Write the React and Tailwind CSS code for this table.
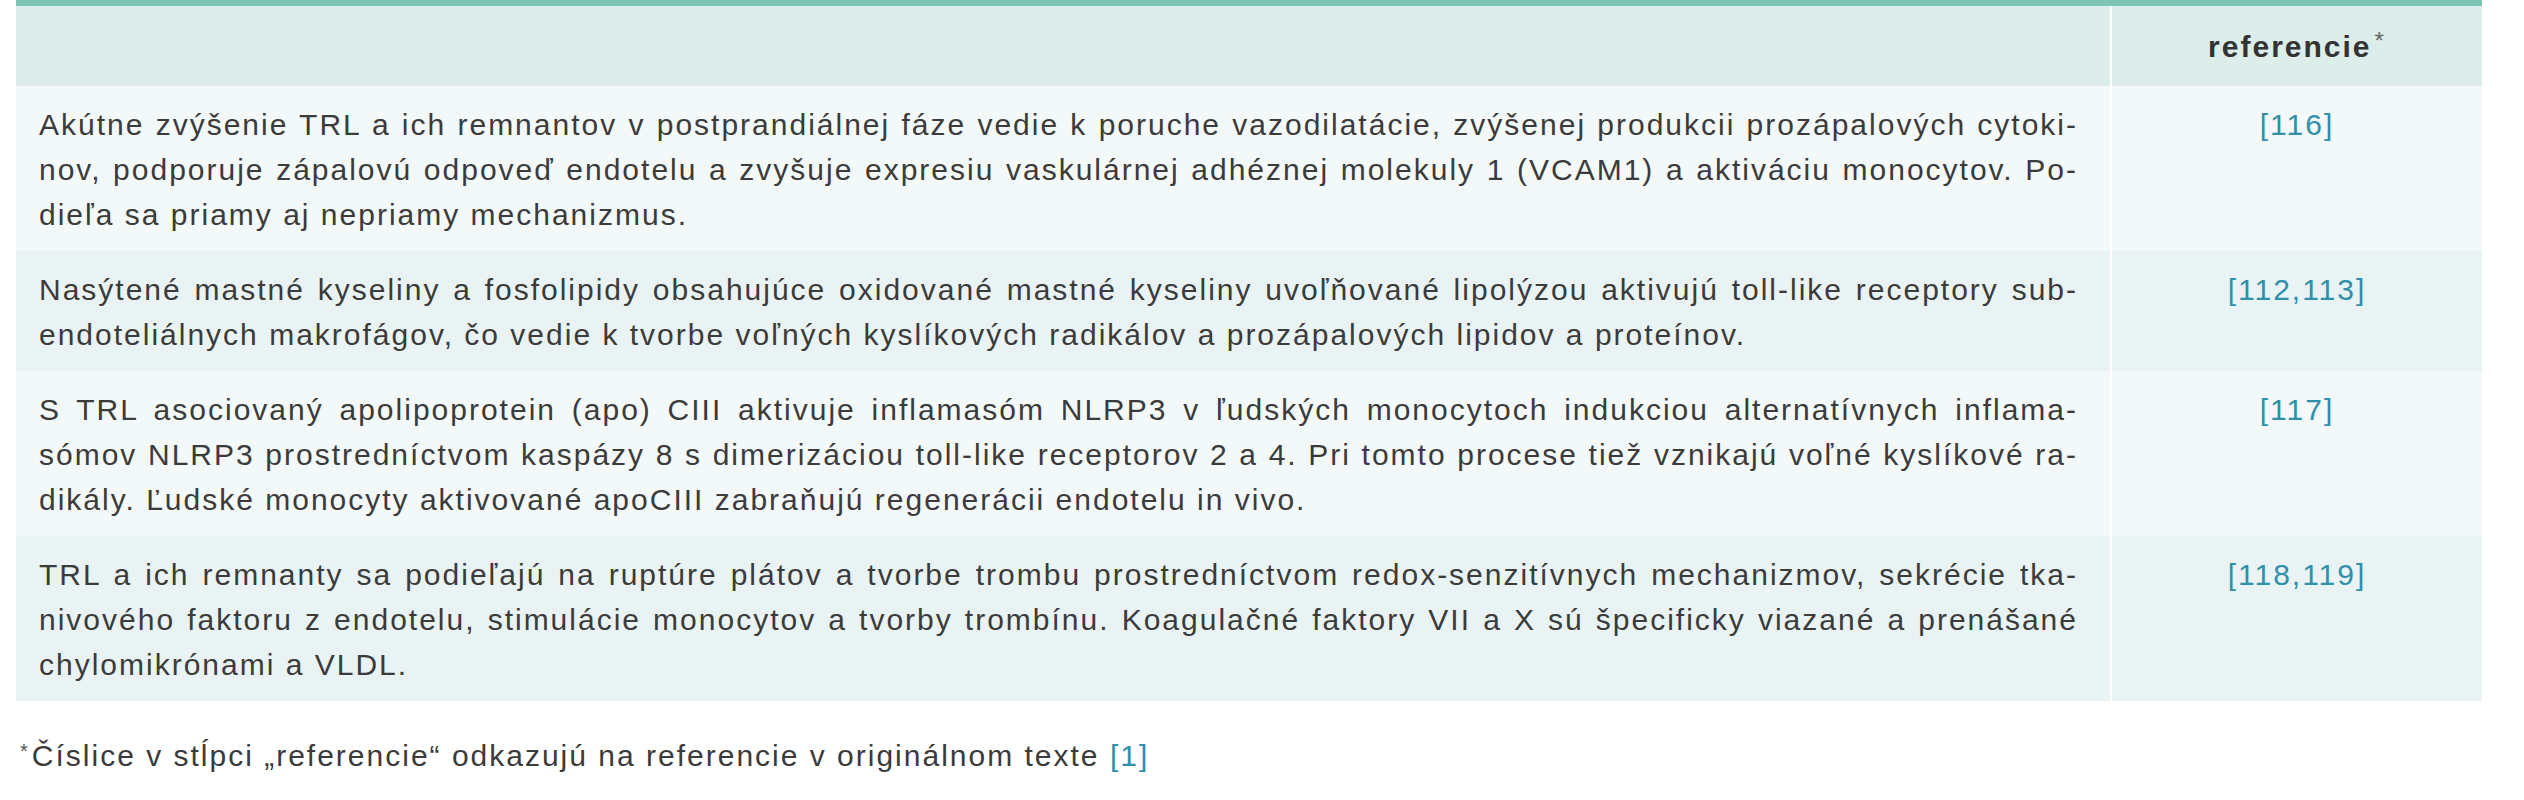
const rows = [
  {
    bg: 'bg-[#f3f8f8]',
    refs: '[116]',
    lines: [
      'Akútne zvýšenie TRL a ich remnantov v postprandiálnej fáze vedie k poruche vazodilatácie, zvýšenej produkcii prozápalových cytoki-',
      'nov, podporuje zápalovú odpoveď endotelu a zvyšuje expresiu vaskulárnej adhéznej molekuly 1 (VCAM1) a aktiváciu monocytov. Po-',
      'dieľa sa priamy aj nepriamy mechanizmus.',
    ],
  },
  {
    bg: 'bg-[#e9f3f3]',
    refs: '[112,113]',
    lines: [
      'Nasýtené mastné kyseliny a fosfolipidy obsahujúce oxidované mastné kyseliny uvoľňované lipolýzou aktivujú toll-like receptory sub-',
      'endoteliálnych makrofágov, čo vedie k tvorbe voľných kyslíkových radikálov a prozápalových lipidov a proteínov.',
    ],
  },
  {
    bg: 'bg-[#f3f8f8]',
    refs: '[117]',
    lines: [
      'S TRL asociovaný apolipoprotein (apo) CIII aktivuje inflamasóm NLRP3 v ľudských monocytoch indukciou alternatívnych inflama-',
      'sómov NLRP3 prostredníctvom kaspázy 8 s dimerizáciou toll-like receptorov 2 a 4. Pri tomto procese tiež vznikajú voľné kyslíkové ra-',
      'dikály. Ľudské monocyty aktivované apoCIII zabraňujú regenerácii endotelu in vivo.',
    ],
  },
  {
    bg: 'bg-[#e9f3f3]',
    refs: '[118,119]',
    lines: [
      'TRL a ich remnanty sa podieľajú na ruptúre plátov a tvorbe trombu prostredníctvom redox-senzitívnych mechanizmov, sekrécie tka-',
      'nivového faktoru z endotelu, stimulácie monocytov a tvorby trombínu. Koagulačné faktory VII a X sú špecificky viazané a prenášané',
      'chylomikrónami a VLDL.',
    ],
  },
];

export default function App() {
  return (
    <div className="min-h-[800px] bg-white font-['Liberation_Sans',Arial,sans-serif] text-[30px] leading-[45px] tracking-[2px] text-[#3b3b3b]">
      <div className="pl-[16px] pr-[42px]">
        <div className="border-t-[6px] border-[#7fc5b5]">
          {/* hlavička */}
          <div className="flex h-[80px] bg-[#dcedea]">
            <div className="flex-1" />
            <div className="flex w-[372px] items-center justify-center border-l-2 border-white font-semibold text-[#333]">
              referencie<span className="relative -top-[6px] ml-[3px] text-[24px] font-normal text-[#666]">*</span>
            </div>
          </div>

          {rows.map((r, i) => (
            <div key={i} className={`flex ${r.bg}`}>
              <div className="min-w-0 flex-1 pt-[16px] pb-[14px] pl-[23px] pr-[32px]">
                {r.lines.map((l, j) => (
                  <div
                    key={j}
                    className={j < r.lines.length - 1 ? 'whitespace-nowrap text-justify [text-align-last:justify]' : 'whitespace-nowrap'}
                  >
                    {l}
                  </div>
                ))}
              </div>
              <div className="w-[372px] border-l-2 border-white pt-[16px] text-center text-[#2f90ab]">
                {r.refs}
              </div>
            </div>
          ))}
        </div>
      </div>

      <div className="mt-[32px] pl-[20px]">
        <span className="relative -top-[8px] mr-[2px] text-[20px] text-[#555]">*</span>
        Číslice v stĺpci „referencie“ odkazujú na referencie v originálnom texte <span className="text-[#2f90ab]">[1]</span>
      </div>
    </div>
  );
}
